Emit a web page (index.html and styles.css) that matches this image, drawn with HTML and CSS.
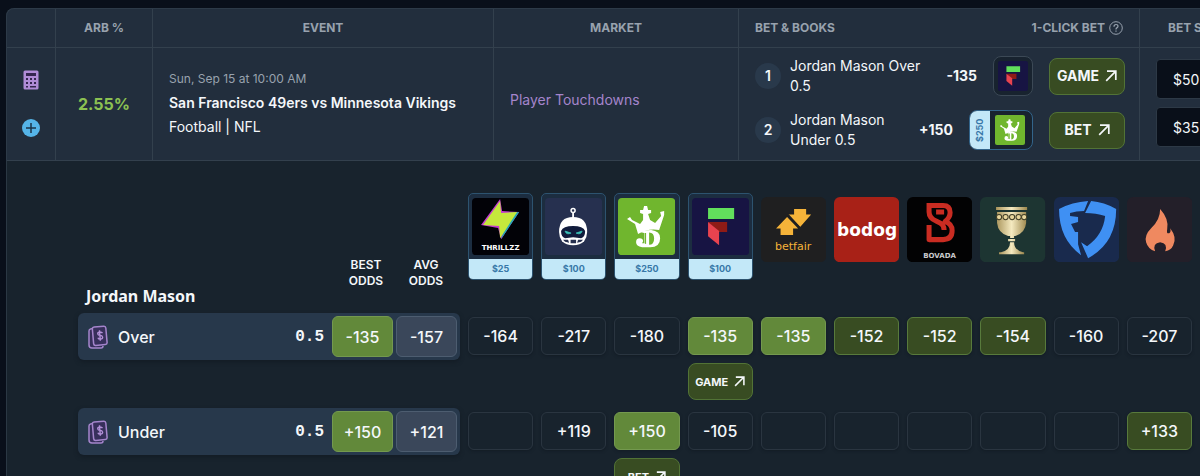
FILE: index.html
```html
<!DOCTYPE html>
<html lang="en">
<head>
<meta charset="utf-8">
<title>Arbitrage bets</title>
<link rel="stylesheet" href="styles.css">
</head>
<body>
<svg class="defs" aria-hidden="true">
  <symbol id="arrow" viewBox="0 0 12 12"><path d="M2 1.200h8.800V10M10.600 1.400 1.200 10.800" fill="none" stroke="currentColor" stroke-width="1.700"/></symbol>
  <symbol id="fliff" viewBox="0 0 57 57"><rect width="57" height="57" rx="4" fill="#171443"/><path d="M16 10h26v11H16z" fill="#62df5c"/><path d="M16 24h19v10H27z" fill="#8f1b16"/><path d="M16 24l11 9v14L16 38z" fill="#e8434f"/></symbol>
  <symbol id="draftkings" viewBox="0 0 57 57"><rect width="57" height="57" rx="4" fill="#70b62e"/>
    <g fill="#fff"><path d="M9 21l3-2 2 3 8 4 3-4 0-6-3-1v-3h3l1-4 3 0 1 4h3v3l-3 1 2 6 5 3 6-7-1-4 4-1 0 4-5 15q-11-2-21 4l-3-10z"/><path fill-rule="evenodd" d="M22 34q4-2 11-2 9 1 9 8 0 9-10 9h-8q-6-1-6-5 0-4 3.500-4t3.500 3l-1 2h2V35zM31 34.500v12q5 0 5-6t-5-6zM26.500 35v10l1.500 1V35z"/></g></symbol>
  <symbol id="slips" viewBox="0 0 20 24"><g fill="#372f5b" stroke="#a585cc" stroke-width="1.500" stroke-linejoin="round"><path d="M4 3.500 2.500 4Q1 4.300 1 6v14q0 3 3 3h9q2 0 2-2"/><rect x="5" y="1.500" width="13.500" height="18.500" rx="2" transform="rotate(-5 12 11)"/></g><path d="M14.500 8.200q-1-1.500-3-1.200-2 .4-1.700 2 .2 1.400 2.300 1.400t2.500 1.700q.2 1.800-2 2-2 .2-2.700-1.400M11.500 5.300l.8 10.500" fill="none" stroke="#b391d9" stroke-width="1.400"/></symbol>
</svg>

<main class="panel">
  <table class="arbs">
    <colgroup><col class="c-tools"><col class="c-arb"><col class="c-event"><col class="c-market"><col class="c-bets"><col class="c-size"></colgroup>
    <thead>
      <tr>
        <th></th><th>ARB %</th><th>EVENT</th><th>MARKET</th>
        <th><div class="split"><span>BET &amp; BOOKS</span><span class="click">1-CLICK BET
          <svg width="14" height="14" viewBox="0 0 14 14" fill="none" stroke="currentColor" stroke-width="1"><circle cx="7" cy="7" r="6.300"/><path d="M5 5.700q0-2.200 2-2.200t2 1.800q0 1-1.200 1.600Q7 7.300 7 8.500M7 9.500v1.300" stroke-width="1.200"/></svg></span></div></th>
        <th class="left">BET SIZE</th>
      </tr>
    </thead>
    <tbody>
      <tr>
        <td><div class="tools">
          <button class="icon" aria-label="Calculator"><svg width="16" height="20" viewBox="0 0 16 20"><rect x=".5" y=".5" width="15" height="19" rx="1.500" fill="#b08cd6"/><g fill="#35264f"><path d="M3 3h10v3H3zM3 8h2v2H3zM7 8h2v2H7zM11 8h2v2h-2zM3 12h2v2H3zM7 12h2v2H7zM11 12h2v2h-2zM3 16h2v1.500H3zM7 16h6v1.500H7z"/></g></svg></button>
          <button class="icon" aria-label="Add"><svg width="18" height="20" viewBox="0 0 18 20"><circle cx="9" cy="10" r="9" fill="#55b4e8"/><path d="M9 5v10M4 10h10" stroke="#1b3347" stroke-width="1.500"/></svg></button>
        </div></td>
        <td class="arb">2.55%</td>
        <td class="event"><div class="date">Sun, Sep 15 at 10:00 AM</div><div class="match">San Francisco 49ers vs Minnesota Vikings</div><div>Football | NFL</div></td>
        <td class="market"><a href="#">Player Touchdowns</a></td>
        <td class="books"><div class="bets">
          <div class="bet"><span class="num">1</span><span class="pick">Jordan Mason Over 0.5</span><b>-135</b><span class="chip"><svg width="30" height="30"><use href="#fliff"/></svg></span><button class="go">GAME <svg width="12" height="12"><use href="#arrow"/></svg></button></div>
          <div class="bet"><span class="num">2</span><span class="pick">Jordan Mason Under 0.5</span><b>+150</b><span class="chip funded"><span class="side">$250</span><svg width="30" height="30"><use href="#draftkings"/></svg></span><button class="go">BET <svg width="12" height="12"><use href="#arrow"/></svg></button></div>
        </div></td>
        <td><div class="sizes"><input aria-label="Bet size 1" value="$50"><input aria-label="Bet size 2" value="$35"></div></td>
      </tr>
    </tbody>
  </table>

  <table class="odds">
    <colgroup><col class="c-player"><col span="10"></colgroup>
    <thead>
      <tr>
        <th scope="col"><div class="heads"><span>BEST ODDS</span><span>AVG ODDS</span></div><div class="player">Jordan Mason</div></th>
        <th><div class="book card"><svg viewBox="0 0 57 57"><rect width="57" height="57" rx="4" fill="#020207"/><path d="M28 1L9 27l17 3 3 11L47 14l-17-1z" fill="#c23ad0"/><path d="M29 41l18-27-10 1z" fill="#20a9b5"/><path d="M28 3L11 27l16 1 1 12L45 14l-16 1z" fill="#c5e83c"/><text x="28.500" y="52" text-anchor="middle" font-size="7" class="wide">THRILLZZ</text></svg><span>$25</span></div></th>
        <th><div class="book card"><svg viewBox="0 0 57 57"><rect width="57" height="57" rx="4" fill="#26304f"/><circle cx="28" cy="12.500" r="2" fill="none" stroke="#fff" stroke-width="1.500"/><path d="M28 14v6" stroke="#fff" stroke-width="1.800"/><path d="M14 34q0-15 14-15t14 15q0 5-3 9-4 4-11 4t-11-4q-3-4-3-9z" fill="#fff"/><path d="M16 33q2-5 12-5t12 5q0 6-4 7l-8-1-8 1q-4-1-4-7z" fill="#111c3c"/><path d="M20 33l6 2q-5 2-6-2M37 33l-6 2q5 2 6-2" fill="#39c1b7" stroke="#39c1b7" stroke-width=".8"/><path d="M18 41.500l5 0 1 3-4-1zM25.500 41.500h5.500v3.500h-5.500zM33 41.500h5l-2 2-4 1z" fill="#26304f"/></svg><span>$100</span></div></th>
        <th><div class="book card"><svg viewBox="0 0 57 57"><use href="#draftkings"/></svg><span>$250</span></div></th>
        <th><div class="book card"><svg viewBox="0 0 57 57"><use href="#fliff"/></svg><span>$100</span></div></th>
        <th><div class="book"><svg viewBox="0 0 65 65"><rect width="65" height="65" rx="6" fill="#1f1f20"/><g fill="#f5b339"><path d="M15 31.500L26 20l11 11.500h-5V38H19.500v-6.500z"/><path d="M33 12h12v5.500h5L39 30 26.500 17.500H33z"/></g><path d="M26 17l13 14" stroke="#1f1f20" stroke-width="2"/><text x="32" y="53" text-anchor="middle" font-size="11" class="plain">betfair</text></svg></div></th>
        <th><div class="book"><svg viewBox="0 0 65 65"><rect width="65" height="65" rx="6" fill="#a82117"/><text x="33" y="39" text-anchor="middle" font-size="17" class="wide">bodog</text></svg></div></th>
        <th><div class="book"><svg viewBox="0 0 65 65"><rect width="65" height="65" rx="6" fill="#020203"/><path d="M22 8.500h14q7 0 7 7 0 5-5 9 7 2 7 9 0 9-9 9H22V28M22 6v9q0 6 7 9l4 2q4 2 4 7M29 15h8" fill="none" stroke="#c92c22" stroke-width="5" stroke-linejoin="round"/><text x="32.500" y="61" text-anchor="middle" font-size="7" class="wide light">BOVADA</text></svg></div></th>
        <th><div class="book"><svg viewBox="0 0 65 65"><defs><linearGradient id="gold"><stop stop-color="#a8935a"/><stop offset=".5" stop-color="#f5eac0"/><stop offset="1" stop-color="#9b864c"/></linearGradient></defs><rect width="65" height="65" rx="6" fill="#1d3532"/><g fill="url(#gold)"><path d="M16 10h31v3H16zM17 15h29v11q-1 10-11 13h-7q-10-3-11-13z"/><path d="M30 37h4v4h-4zM28 42h7v2h-7zM30 45h4q0 8 9 10H21q9-2 9-10zM19 55h25v2H19z"/></g><g fill="#e7d59c" stroke="#3f3d25"><circle cx="19" cy="20" r="2.600"/><circle cx="25.500" cy="20" r="2.600"/><circle cx="32" cy="20" r="2.600"/><circle cx="38.500" cy="20" r="2.600"/><circle cx="44" cy="20" r="2.600"/></g></svg></div></th>
        <th><div class="book"><svg viewBox="0 0 65 65"><rect width="65" height="65" rx="6" fill="#192a4d"/><g fill="#3f90f3"><path d="M34 4Q18 5 5 12q0 30 22 46l-3-11 0-12h-3l-4-8 7-2v-5l-8-1 0-3q6-2 14-2z"/><path d="M37 4q13 1 25 8 0 34-28 49l-7-16 6 4q16-11 18-30-9-3-20-3z"/></g></svg></div></th>
        <th><div class="book"><svg viewBox="0 0 65 65"><rect width="65" height="65" rx="6" fill="#231f29"/><path d="M33 12q9 10 7 20-1 5 2 4 2-1 1-5 7 9 3 17-2 5-8 6 3-8-5-9-8 1-5 9-7-2-9-9-2-7 5-14 9-8 9-19z" fill="#ef8960"/></svg></div></th>
      </tr>
    </thead>
    <tbody>
      <tr>
        <th scope="row"><div class="bar"><svg width="20" height="24"><use href="#slips"/></svg><span class="name">Over</span><span class="line">0.5</span><span class="pill best">-135</span><span class="pill avg">-157</span></div></th>
        <td><div class="cell">-164</div></td><td><div class="cell">-217</div></td><td><div class="cell">-180</div></td>
        <td><div class="cell top">-135</div><button class="go small">GAME <svg width="11" height="11"><use href="#arrow"/></svg></button></td>
        <td><div class="cell top">-135</div></td><td><div class="cell good">-152</div></td><td><div class="cell good">-152</div></td><td><div class="cell good">-154</div></td><td><div class="cell">-160</div></td><td><div class="cell">-207</div></td>
      </tr>
      <tr>
        <th scope="row"><div class="bar"><svg width="20" height="24"><use href="#slips"/></svg><span class="name">Under</span><span class="line">0.5</span><span class="pill best">+150</span><span class="pill avg">+121</span></div></th>
        <td><div class="cell"></div></td><td><div class="cell">+119</div></td>
        <td><div class="cell top">+150</div><button class="go small">BET <svg width="11" height="11"><use href="#arrow"/></svg></button></td>
        <td><div class="cell">-105</div></td><td><div class="cell"></div></td><td><div class="cell"></div></td><td><div class="cell"></div></td><td><div class="cell"></div></td><td><div class="cell"></div></td><td><div class="cell good">+133</div></td>
      </tr>
    </tbody>
  </table>
</main>
</body>
</html>
```
FILE: styles.css
```css
* { box-sizing: border-box; }
body {
  margin: 0;
  padding: 8px 0 0 6px;
  height: 100vh;
  overflow: hidden;
  background: #090f1a;
  color: #f4f7fa;
  font: 15px/20px Inter, sans-serif;
}
.defs { display: none; }
svg { display: block; flex: none; }
button { font: inherit; color: inherit; cursor: pointer; }
.panel {
  overflow: hidden;
  min-height: 100%;
  background: #18232d;
  border-radius: 8px 0 0 0;
  box-shadow: inset 1px 0 #2b3844;
}

.arbs {
  width: 100%;
  min-width: 1280px;
  table-layout: fixed;
  border-collapse: separate;
  border-spacing: 0;
  background: #222e3d;
  border-top: 1px solid #2d3a48;
  border-left: 1px solid #2d3a48;
  border-radius: 8px 0 0 0;
}
.c-tools { width: 49px; }
.c-arb { width: 97px; }
.c-market { width: 245px; }
.c-bets { width: 401px; }
.c-size { width: 146px; }
.arbs th, .arbs td {
  padding: 0 16px;
  border-right: 1px solid #33404d;
  border-bottom: 1px solid #33404d;
}
.arbs th { height: 39px; font-size: 12px; font-weight: 700; color: #98a2ae; }
.arbs td { height: 113px; padding-bottom: 2px; }
.arbs th.left { text-align: left; padding-left: 28px; }
.arbs th:first-child, .arbs td:first-child { padding: 0; }
.arbs .books { padding-right: 14px; }
.split { display: flex; justify-content: space-between; }
.click { display: flex; align-items: center; gap: 4px; }
.tools { display: flex; flex-direction: column; align-items: center; gap: 28px; }
.icon { padding: 0; border: 0; background: none; }
.arbs .arb { padding: 0; text-align: center; color: #8cc152; font-size: 16px; font-weight: 700; }
.event { font-size: 14px; line-height: 24px; }
.date { font-size: 12px; color: #98a2ae; }
.match { font-weight: 600; }
.arbs .market { padding-bottom: 8px; font-size: 14px; }
.market a { color: #a585cc; text-decoration: none; }

.bets { display: flex; flex-direction: column; gap: 14px; }
.bet { display: flex; align-items: center; height: 40px; font-size: 14px; }
.num {
  width: 26px;
  line-height: 26px;
  margin-right: 9px;
  flex: none;
  text-align: center;
  border-radius: 50%;
  background: #29394b;
  font-weight: 600;
}
.pick { flex: 1; }
.bet b { margin: 0 16px 0 8px; font-weight: 700; }
.chip {
  display: flex;
  align-items: center;
  padding: 4px;
  height: 40px;
  border: 1px solid #3c4956;
  border-radius: 8px;
  background: #18232f;
  overflow: hidden;
}
.chip.funded { padding: 0 7px 0 0; gap: 5px; border-color: #33648a; }
.side {
  width: 20px;
  height: 40px;
  line-height: 20px;
  writing-mode: vertical-rl;
  transform: rotate(180deg);
  text-align: center;
  background: #c3e8f8;
  color: #3878a8;
  font-size: 9px;
  font-weight: 700;
}
.go {
  display: flex;
  align-items: center;
  justify-content: center;
  gap: 6px;
  width: 76px;
  height: 37px;
  margin-left: 16px;
  padding: 0;
  border: 1px solid #527336;
  border-radius: 8px;
  background: #384c22;
  font-size: 14px;
  font-weight: 700;
}
.go.small { width: 100%; height: 37px; margin: 8px 0 0; font-size: 11px; }
.sizes { display: flex; flex-direction: column; gap: 8px; }
.sizes input {
  width: 100%;
  height: 40px;
  padding: 0 16px;
  border: 1px solid #2d3946;
  border-radius: 4px;
  background: #090f19;
  color: inherit;
  font: inherit;
  font-size: 14px;
}

.odds {
  width: calc(100% - 64px);
  margin: 32px 0 0 64px;
  table-layout: fixed;
  border-collapse: separate;
  border-spacing: 8px 0;
}
.c-player { width: 382px; }
.odds th, .odds td { padding: 0; vertical-align: top; font-weight: 500; }
.odds thead th { height: 120px; }
.heads {
  display: flex;
  justify-content: flex-end;
  padding: 64px 4px 0 0;
  font-size: 12px;
  font-weight: 600;
  line-height: 16px;
}
.heads span { width: 60px; padding: 0 10px; }
.player { padding-left: 8px; text-align: left; font: 700 16px/14px "Noto Sans", sans-serif; }
.book { padding-top: 4px; }
.card {
  padding: 4px 3px 0;
  border: 1px solid #2d536f;
  border-radius: 5px;
  background: #1c2d40;
  overflow: hidden;
}
.card span {
  display: block;
  margin: 4px -3px 0;
  background: #c3e8f8;
  color: #3878a8;
  font-size: 9px;
  font-weight: 700;
}
.wide { font-family: "DejaVu Sans", sans-serif; font-weight: 700; fill: #fff; }
.light { fill: #c9c9cb; }
.plain { font-family: "DejaVu Sans", sans-serif; fill: #f5b339; }

.odds tbody tr { height: 95px; }
.bar {
  display: flex;
  align-items: center;
  height: 47px;
  padding: 0 3px 0 10px;
  border-radius: 6px;
  background: #27384b;
  box-shadow: 0 2px 4px #131c25;
  font-size: 16px;
}
.name { flex: 1; padding-left: 10px; text-align: left; }
.line { margin-right: 8px; font: 700 16px/20px "Liberation Mono", monospace; }
.pill, .cell {
  display: flex;
  align-items: center;
  justify-content: center;
  border: 1px solid #2a3540;
  border-radius: 6px;
  font-size: 16px;
  font-weight: 500;
}
.pill { width: 61px; height: 41px; }
.pill + .pill { margin-left: 3px; }
.cell { height: 38px; margin-top: 4px; box-shadow: 0 1px 3px #131c25; }
.pill.best, .cell.top { background: #62893a; border-color: #74994f; }
.pill.avg { background: #3a475a; border-color: #4d5d70; }
.cell.good { background: #384c22; border-color: #587a3c; }
```
